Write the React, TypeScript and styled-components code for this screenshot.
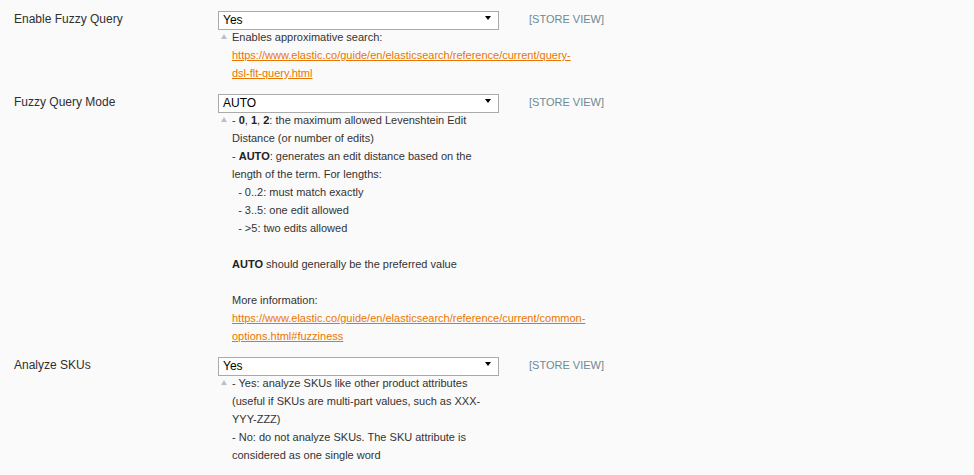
import styled, { createGlobalStyle } from 'styled-components'

const GlobalStyle = createGlobalStyle`
  body {
    margin: 0;
    background: #fafafa;
    font-family: "Liberation Sans", Arial, sans-serif;
    color: #2f2f2f;
  }
`

const Page = styled.div`
  padding: 10px 0 0 14px;
`

const Row = styled.div`
  display: grid;
  grid-template-columns: 204px 281px auto;
  align-items: start;
  margin-bottom: 11px;
`

const Label = styled.label`
  font-size: 12px;
  line-height: 18px;
  color: #2f2f2f;
`

const Value = styled.div`
  width: 281px;
`

const SelectWrap = styled.div`
  position: relative;
  height: 18px;
`

const Select = styled.select`
  appearance: none;
  -webkit-appearance: none;
  box-sizing: border-box;
  width: 100%;
  height: 19px;
  margin: 0;
  padding: 0 0 0 4px;
  border: 1px solid #aaa;
  border-radius: 0;
  background: #fff;
  font-family: "Liberation Sans", Arial, sans-serif;
  font-size: 12px;
  color: #000;
  outline: none;
`

const Arrow = styled.span`
  position: absolute;
  top: 6px;
  right: 8px;
  width: 0;
  height: 0;
  border-left: 3px solid transparent;
  border-right: 3px solid transparent;
  border-top: 4px solid #000;
  pointer-events: none;
`

const Note = styled.p`
  position: relative;
  margin: 0;
  padding-left: 14px;
  font-size: 11px;
  line-height: 18px;
  color: #333;

  &::before {
    content: '';
    position: absolute;
    left: 3px;
    top: 6px;
    border-left: 3px solid transparent;
    border-right: 3px solid transparent;
    border-bottom: 5px solid #b6c1c8;
  }

  b {
    color: #222;
  }

  a {
    color: #ea7601;
    text-decoration: underline;
  }
`

const Scope = styled.span`
  padding-left: 30px;
  font-size: 11px;
  line-height: 18px;
  color: #6f8992;
`

type FieldProps = {
  label: string
  value: string
  options: string[]
  children: React.ReactNode
}

function Field({ label, value, options, children }: FieldProps) {
  return (
    <Row>
      <Label>{label}</Label>
      <Value>
        <SelectWrap>
          <Select defaultValue={value}>
            {options.map((o) => (
              <option key={o} value={o}>
                {o}
              </option>
            ))}
          </Select>
          <Arrow />
        </SelectWrap>
        <Note>{children}</Note>
      </Value>
      <Scope>[STORE VIEW]</Scope>
    </Row>
  )
}

export default function App() {
  return (
    <>
      <GlobalStyle />
      <Page>
        <Field label="Enable Fuzzy Query" value="Yes" options={['Yes', 'No']}>
          Enables approximative search:
          <br />
          <a href="#">
            https://www.elastic.co/guide/en/elasticsearch/reference/current/query-dsl-flt-query.html
          </a>
        </Field>

        <Field label="Fuzzy Query Mode" value="AUTO" options={['AUTO', '0', '1', '2']}>
          - <b>0</b>, <b>1</b>, <b>2</b>: the maximum allowed Levenshtein Edit Distance (or
          number of edits)
          <br />- <b>AUTO</b>: generates an edit distance based on the length of the term. For
          lengths:
          <br />
          {'\u00a0\u00a0'}- 0..2: must match exactly
          <br />
          {'\u00a0\u00a0'}- 3..5: one edit allowed
          <br />
          {'\u00a0\u00a0'}- &gt;5: two edits allowed
          <br />
          <br />
          <b>AUTO</b> should generally be the preferred value
          <br />
          <br />
          More information:
          <br />
          <a href="#">
            https://www.elastic.co/guide/en/elasticsearch/reference/current/common-options.html#fuzziness
          </a>
        </Field>

        <Field label="Analyze SKUs" value="Yes" options={['Yes', 'No']}>
          - Yes: analyze SKUs like other product attributes (useful if SKUs are multi-part
          values, such as XXX-YYY-ZZZ)
          <br />- No: do not analyze SKUs. The SKU attribute is considered as one single word
        </Field>
      </Page>
    </>
  )
}
